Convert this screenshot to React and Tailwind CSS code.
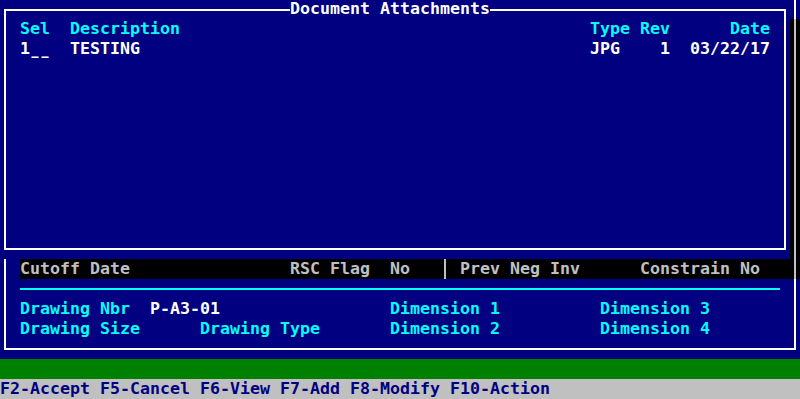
export default function App() {
  const sp = (n) => " ".repeat(n);
  const row1 = "Sel  Description" + sp(41) + "Type Rev" + sp(6) + "Date";
  const Us = () => (
    <span className="inline-block w-[10px] text-center scale-x-[0.7]">_</span>
  );
  return (
    <div className="w-[800px] h-[399px] overflow-hidden bg-[#000080]">
      <div className="-mt-px font-['DejaVu_Sans_Mono','Liberation_Mono',monospace] text-[16.61px] leading-[20px] font-bold whitespace-pre">
        {/* rows 0-13 */}
        <div className="flex h-[280px]">
          <div className="w-[790px] flex flex-col">
            <div className="h-[260px] pl-[4px] pt-[10px]">
              <div className="relative w-[782px] h-[241px] border-2 border-white pl-[14px] pt-[8px]">
                <div className="absolute left-[284px] -top-[12px] h-[20px] bg-[#000080] text-white">
                  Document Attachments
                </div>
                <div className="h-[20px] text-[#00ffff]">{row1}</div>
                <div className="h-[20px] text-white">
                  <span>1</span>
                  <Us />
                  <Us />
                  <span>{"  TESTING" + sp(45) + "JPG" + sp(4) + "1" + sp(2) + "03/22/17"}</span>
                </div>
              </div>
            </div>
            <div className="flex h-[20px]">
              <div className="w-[20px] pl-[4px]">
                <div className="w-[2px] h-full bg-white" />
              </div>
              <div className="flex-1 bg-black text-[#c0c0c0] flex">
                <span>{"Cutoff Date" + sp(16) + "RSC Flag" + sp(2) + "No" + sp(3)}</span>
                <span className="inline-block w-[10px] h-[20px] pl-[4px]">
                  <span className="block w-[2px] h-[20px] bg-[#c0c0c0]" />
                </span>
                <span>{" Prev Neg Inv" + sp(6) + "Constrain No"}</span>
              </div>
            </div>
          </div>
          <div className="w-[10px] flex flex-col">
            <div className="h-[20px] pl-[4px]">
              <div className="w-[2px] h-full bg-white" />
            </div>
            <div className="flex-1 bg-black pl-[4px]">
              <div className="w-[2px] h-full bg-[#c0c0c0]" />
            </div>
          </div>
        </div>
        {/* rows 14-17 */}
        <div className="h-[80px] pl-[4px]">
          <div className="w-[792px] h-[71px] border-x-2 border-b-2 border-white pl-[14px]">
            <div className="h-[20px] pt-[9px]">
              <div className="w-[760px] h-[2px] bg-[#00ffff]" />
            </div>
            <div className="h-[20px] text-[#00ffff]">
              <span>{"Drawing Nbr  "}</span>
              <span className="text-white">P-A3-01</span>
              <span>{sp(17) + "Dimension 1" + sp(10) + "Dimension 3"}</span>
            </div>
            <div className="h-[20px] text-[#00ffff]">
              {"Drawing Size" + sp(6) + "Drawing Type" + sp(7) + "Dimension 2" + sp(10) + "Dimension 4"}
            </div>
          </div>
        </div>
        {/* row 18 */}
        <div className="h-[20px] bg-[#008000]" />
        {/* row 19 */}
        <div className="h-[20px] bg-[#c0c0c0] text-[#000080]">
          F2-Accept F5-Cancel F6-View F7-Add F8-Modify F10-Action
        </div>
      </div>
    </div>
  );
}
